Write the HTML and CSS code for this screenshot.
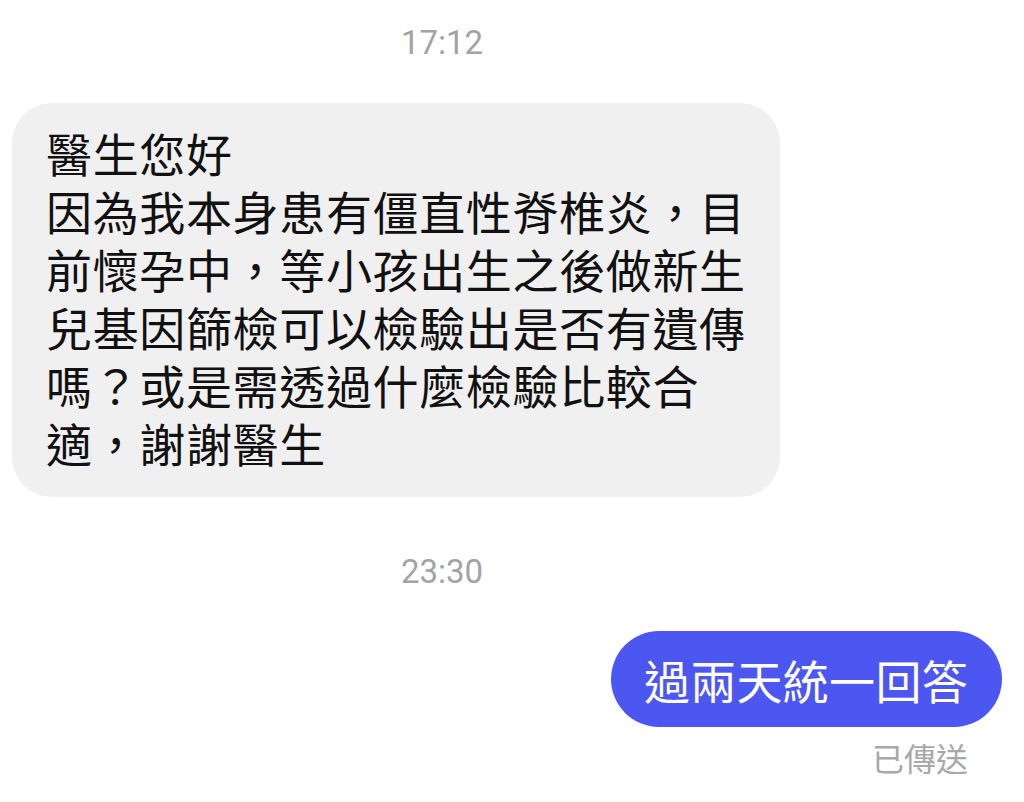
FILE: index.html
```html
<!DOCTYPE html>
<html lang="zh-Hant">
<head>
<meta charset="utf-8">
<title>Chat</title>
<link rel="stylesheet" href="styles.css">
</head>
<body>
<main class="chat">
  <div class="time time-first">17:12</div>
  <div class="row row-in">
    <div class="bubble bubble-in">醫生您好<br>因為我本身患有僵直性脊椎炎，目前懷孕中，等小孩出生之後做新生兒基因篩檢可以檢驗出是否有遺傳嗎？或是需透過什麼檢驗比較合適，謝謝醫生</div>
  </div>
  <div class="time time-second">23:30</div>
  <div class="row row-out">
    <div class="bubble bubble-out">過兩天統一回答</div>
  </div>
  <div class="status">已傳送</div>
</main>
</body>
</html>
```

FILE: styles.css
```css
html, body {
  margin: 0;
  padding: 0;
  background: #ffffff;
}

body {
  font-family: "Noto Sans CJK TC", "Noto Sans", sans-serif;
  width: 1024px;
  height: 802px;
  overflow: hidden;
}

.chat {
  display: flex;
  flex-direction: column;
  padding: 23px 22px 0 12px;
}

.time {
  font-family: Roboto, "Noto Sans CJK TC", sans-serif;
  font-size: 33px;
  line-height: 40px;
  color: #a3a3a3;
  text-align: center;
  padding-right: 130px;
}

.time-first {
  margin-bottom: 40px;
}

.time-second {
  margin-top: 55px;
  margin-bottom: 39px;
}

.row {
  display: flex;
}

.row-in {
  justify-content: flex-start;
}

.row-out {
  justify-content: flex-end;
}

.bubble {
  font-size: 46px;
  letter-spacing: 0.65px;
  line-height: 58px;
}

.bubble-in {
  background: #f0f0f0;
  color: #111111;
  width: 702px;
  padding: 20px 32px 26px 34px;
  border-radius: 40px;
}

.bubble-out {
  background: #4c56f1;
  color: #ffffff;
  height: 96px;
  box-sizing: border-box;
  padding: 19px 34px 19px 33px;
  border-radius: 48px;
  letter-spacing: 0.3px;
}

.status {
  align-self: flex-end;
  font-size: 32px;
  line-height: 40px;
  color: #a8a8a8;
  margin-top: 10px;
  margin-right: 34px;
}
```
